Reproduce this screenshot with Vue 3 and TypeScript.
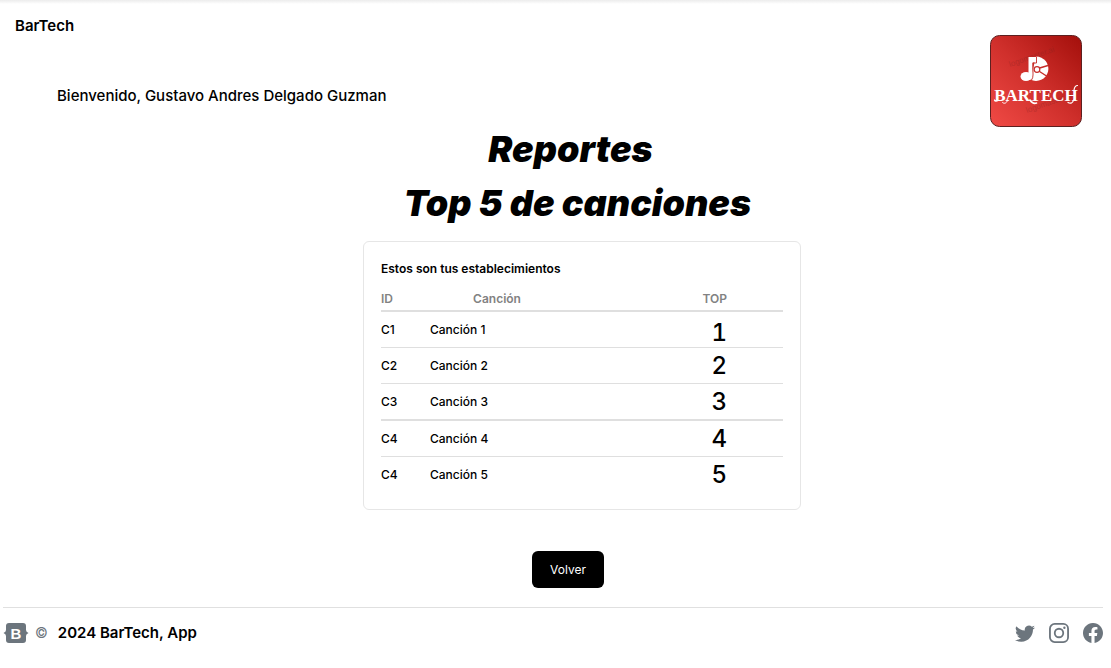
<script setup lang="ts">
interface Song {
  id: string
  name: string
  top: number
}

const userName = 'Gustavo Andres Delgado Guzman'

const songs: Song[] = [
  { id: 'C1', name: 'Canción 1', top: 1 },
  { id: 'C2', name: 'Canción 2', top: 2 },
  { id: 'C3', name: 'Canción 3', top: 3 },
  { id: 'C4', name: 'Canción 4', top: 4 },
  { id: 'C4', name: 'Canción 5', top: 5 },
]
</script>

<template>
  <div class="page">
    <header class="header">
      <div class="intro">
        <a class="brand" href="#">BarTech</a>
        <p class="welcome">Bienvenido, {{ userName }}</p>
      </div>
      <svg class="logo" viewBox="0 0 92 92" role="img" aria-label="Bartech">
        <defs>
          <linearGradient id="logo-red" x1="0" y1="1" x2="1" y2="0">
            <stop offset="0" stop-color="#f04a45" />
            <stop offset="0.5" stop-color="#cf2f2b" />
            <stop offset="1" stop-color="#a30f0b" />
          </linearGradient>
        </defs>
        <rect x="0.5" y="0.5" width="91" height="91" rx="9" fill="url(#logo-red)" stroke="#5c2020" />
        <g class="watermark">
          <text x="20" y="32" transform="rotate(-19 20 32)">logomaster.ai</text>
          <text x="37" y="78" transform="rotate(-19 37 78)">logomaster.ai</text>
        </g>
        <path d="M46 21.500a12.200 12.200 0 1 1-5.500 23Z" fill="#fff" />
        <path d="M48 33.500 58 30.500M48 35.500 56.500 41" stroke="#c52d29" stroke-width="1.400" />
        <circle cx="47" cy="34.500" r="2.800" fill="#fff" stroke="#c52d29" stroke-width="1.200" />
        <path d="M38.500 22H46v5.500h-3.500V41q0 4-4 4Z" fill="#fff" />
        <path d="M46.500 21.500v6.500H43v12q0 3-1.500 5" fill="none" stroke="#c52d29" stroke-width="0.900" />
        <ellipse cx="36" cy="41.500" rx="5.500" ry="4.500" fill="#fff" />
        <text class="wordmark" x="46" y="66" text-anchor="middle">BARTECH</text>
        <g fill="none" stroke="#fff" stroke-linecap="round">
          <path d="M8 65.500c-1.500 1-3 1-3.500-.500" stroke-width="1.300" />
          <path d="M17.500 65.500c-1 3-3.500 3.500-5 2" stroke-width="1" />
          <path d="M40 65c2 3 4 4 6.500 3" stroke-width="1.600" />
          <path d="M84 55c.500-3 1.500-4.500 3.500-4.500M83.500 65c-.500 3-3 4-5.500 2.500" stroke-width="1.200" />
        </g>
      </svg>
    </header>

    <main class="main">
      <h1 class="title title-report">Reportes</h1>
      <h2 class="title title-top">Top 5 de canciones</h2>

      <section class="card">
        <table class="songs">
          <caption>Estos son tus establecimientos</caption>
          <thead>
            <tr>
              <th class="col-id" scope="col">ID</th>
              <th class="col-name" scope="col">Canción</th>
              <th class="col-top" scope="col">TOP</th>
            </tr>
          </thead>
          <tbody>
            <tr v-for="song in songs" :key="song.name">
              <td>{{ song.id }}</td>
              <td>{{ song.name }}</td>
              <td class="col-top">{{ song.top }}</td>
            </tr>
          </tbody>
        </table>
      </section>

      <button class="back" type="button">Volver</button>
    </main>

    <footer class="footer">
      <div class="copyright">
        <svg class="bootstrap" viewBox="0 0 26 22" aria-hidden="true">
          <path d="M6 1h14a3 3 0 0 1 3 3v4q0 2 2.500 3Q23 12 23 14v4a3 3 0 0 1-3 3H6a3 3 0 0 1-3-3v-4q0-2-2.500-3Q3 10 3 8V4a3 3 0 0 1 3-3Z" fill="#6c757d" />
          <text x="13" y="16.500" text-anchor="middle">B</text>
        </svg>
        <span class="copy-mark">©</span>
        <span>2024 BarTech, App</span>
      </div>
      <nav class="social" aria-label="Redes sociales">
        <a href="#" aria-label="Twitter">
          <svg viewBox="0 0 16 16" fill="currentColor">
            <path d="M5.026 15c6.038 0 9.341-5.003 9.341-9.334q.002-.211-.006-.422A6.700 6.700 0 0 0 16 3.542a6.700 6.700 0 0 1-1.889.518 3.300 3.300 0 0 0 1.447-1.817 6.500 6.500 0 0 1-2.087.793A3.286 3.286 0 0 0 7.875 6.030a9.320 9.320 0 0 1-6.767-3.429 3.290 3.290 0 0 0 1.018 4.382A3.300 3.300 0 0 1 .640 6.575v.045a3.290 3.290 0 0 0 2.632 3.218 3.200 3.200 0 0 1-.865.115 3 3 0 0 1-.614-.057 3.280 3.280 0 0 0 3.067 2.277A6.600 6.600 0 0 1 .780 13.580a6 6 0 0 1-.780-.045A9.340 9.340 0 0 0 5.026 15" />
          </svg>
        </a>
        <a href="#" aria-label="Instagram">
          <svg viewBox="0 0 16 16" fill="none" stroke="currentColor" stroke-width="1.450">
            <rect x="0.750" y="0.750" width="14.500" height="14.500" rx="3.800" />
            <circle cx="8" cy="8" r="3.400" />
            <circle cx="12.300" cy="3.750" r="0.950" fill="currentColor" stroke="none" />
          </svg>
        </a>
        <a href="#" aria-label="Facebook">
          <svg viewBox="0 0 16 16" fill="currentColor">
            <path d="M16 8.049c0-4.446-3.582-8.050-8-8.050C3.580 0-.002 3.603-.002 8.050c0 4.017 2.926 7.347 6.750 7.951v-5.625h-2.030V8.050H6.750V6.275c0-2.017 1.195-3.131 3.022-3.131.876 0 1.791.157 1.791.157v1.980h-1.009c-.993 0-1.303.621-1.303 1.258v1.510h2.218l-.354 2.326H9.250V16c3.824-.604 6.750-3.934 6.750-7.951" />
          </svg>
        </a>
      </nav>
    </footer>
  </div>
</template>

<style>
body {
  margin: 0;
  background: #fff;
}
</style>

<style scoped>
.page {
  font-family: Inter, "Liberation Sans", sans-serif;
  font-size: 15px;
  line-height: 20px;
  color: #000;
}

.header {
  display: flex;
  justify-content: space-between;
  align-items: flex-end;
  padding: 16px 29px 0 15px;
  background: linear-gradient(#ececec, #fff 4px);
}

.intro {
  align-self: flex-start;
}

.brand {
  color: inherit;
  font-weight: 600;
  text-decoration: none;
}

.welcome {
  margin: 50px 0 0 42px;
  font-weight: 500;
}

.logo {
  width: 92px;
  height: 92px;
  margin-top: 19px;
}

.wordmark {
  font: bold 17px "Liberation Serif", serif;
  fill: #fff;
}

.watermark {
  font: 8px "Liberation Sans", sans-serif;
  fill: #7a2020;
  opacity: 0.3;
}

.main {
  display: flex;
  flex-direction: column;
  align-items: center;
}

.title {
  margin: 0;
  font-size: 36px;
  font-style: italic;
  font-weight: 900;
  line-height: 44px;
}

.title-report {
  margin-left: 30px;
}

.title-top {
  margin-top: 10px;
  margin-left: 44px;
}

.card {
  box-sizing: border-box;
  width: 100%;
  max-width: 438px;
  margin: 16px 0 0 53px;
  padding: 17px 17px 17px;
  border: 1px solid #e6e6e6;
  border-radius: 6px;
}

.songs {
  width: 100%;
  table-layout: fixed;
  border-collapse: separate;
  border-spacing: 0;
  font-size: 12px;
  font-weight: 500;
}

.songs caption {
  padding-bottom: 10px;
  font-weight: 600;
  text-align: left;
}

.songs th {
  height: 21px;
  padding: 0;
  border-bottom: 2px solid #dfdfdf;
  color: #828282;
  font-weight: 600;
  text-align: left;
  vertical-align: top;
}

.songs td {
  height: 35px;
  padding: 0;
  border-bottom: 1px solid #dfdfdf;
}

.songs tbody tr:nth-child(3) td {
  border-bottom-width: 2px;
}

.songs tbody tr:last-child td {
  border-bottom: 0;
}

.songs .col-id {
  width: 49px;
}

.songs .col-name {
  width: 134px;
  text-align: center;
}

.songs .col-top {
  padding-right: 56px;
  text-align: right;
}

.songs td.col-top {
  font-size: 24px;
  font-variant-numeric: tabular-nums;
  line-height: 28px;
}

.songs tbody tr:first-child .col-top {
  vertical-align: bottom;
}

.back {
  margin: 41px 0 0 25px;
  padding: 8px 18px;
  border: 0;
  border-radius: 6px;
  background: #000;
  color: #fff;
  font: 12px/21px Inter, sans-serif;
}

.footer {
  display: flex;
  justify-content: space-between;
  align-items: center;
  margin: 19px 8px 0 3px;
  padding-top: 14px;
  border-top: 1px solid #e0e0e0;
}

.copyright {
  display: flex;
  align-items: center;
  font-weight: 600;
}

.bootstrap {
  width: 26px;
  height: 22px;
}

.bootstrap text {
  font: bold 15px "Liberation Sans", sans-serif;
  fill: #fff;
}

.copy-mark {
  margin: 0 10px 0 6px;
  color: #6c757d;
  font-size: 14px;
  font-weight: 400;
}

.social {
  display: flex;
  gap: 14px;
}

.social a {
  display: flex;
  color: #6c757d;
}

.social svg {
  width: 20px;
  height: 20px;
}
</style>
